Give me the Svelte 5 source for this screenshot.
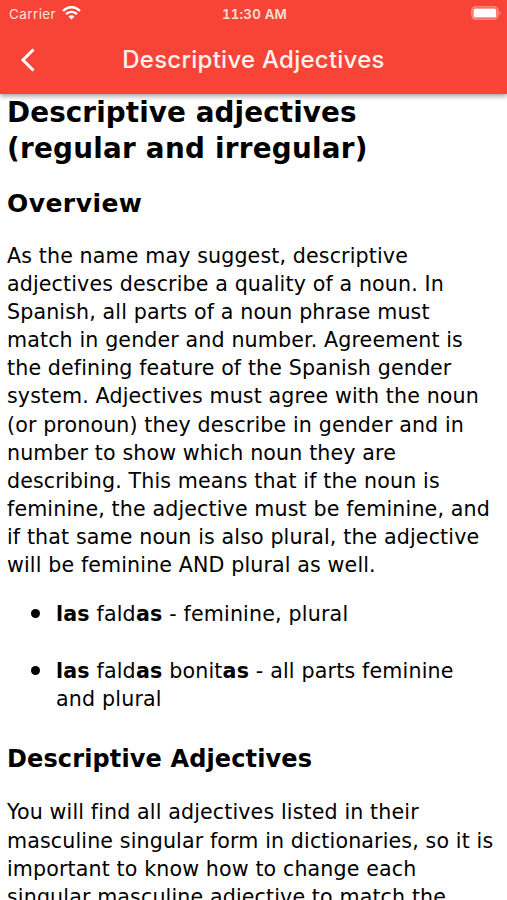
<script>
  const overview = [
    "As the name may suggest, descriptive",
    "adjectives describe a quality of a noun. In",
    "Spanish, all parts of a noun phrase must",
    "match in gender and number. Agreement is",
    "the defining feature of the Spanish gender",
    "system. Adjectives must agree with the noun",
    "(or pronoun) they describe in gender and in",
    "number to show which noun they are",
    "describing. This means that if the noun is",
    "feminine, the adjective must be feminine, and",
    "if that same noun is also plural, the adjective",
    "will be feminine AND plural as well."
  ];

  const endings = [
    "You will find all adjectives listed in their",
    "masculine singular form in dictionaries, so it is",
    "important to know how to change each",
    "singular masculine adjective to match the"
  ];
</script>

<style>
  :global(body) {
    background: white;
    overflow: hidden;
  }

  .screen {
    height: 900px;
    overflow: hidden;
    display: flex;
    flex-direction: column;
    color: black;
    background: white;
  }

  header {
    flex: none;
    height: 94px;
    position: relative;
    z-index: 1;
    color: white;
    background: #f74436;
    box-shadow: 0 2px 5px rgba(0, 0, 0, 0.4);
  }

  .status {
    height: 27px;
    display: grid;
    grid-template-columns: 1fr auto 1fr;
    align-items: center;
    padding: 0 5px 0 9px;
    font: 13.5px Inter, sans-serif;
    color: #fee0dd;
  }

  .carrier {
    display: flex;
    align-items: center;
    gap: 6px;
    letter-spacing: 0.4px;
  }

  .carrier svg {
    margin-top: -2px;
  }

  .time {
    font-size: 13.3px;
    font-weight: 600;
    font-variant-numeric: tabular-nums;
    letter-spacing: 0.2px;
    margin-right: 2px;
  }

  .battery {
    justify-self: end;
    margin-top: -1px;
  }

  svg {
    display: block;
  }

  .bar {
    height: 67px;
    display: grid;
    grid-template-columns: 56px 1fr 56px;
    align-items: center;
  }

  .back {
    border: 0;
    padding: 0 0 2px 20px;
    color: white;
    background: transparent;
  }

  .title {
    font: 500 24px Inter, sans-serif;
    letter-spacing: 0.25px;
    text-align: center;
    white-space: nowrap;
    padding-bottom: 2px;
    color: #fff1ef;
  }

  main {
    padding: 1px 7px 0;
    font: 20.6px/28.1px "DejaVu Sans", Verdana, sans-serif;
    letter-spacing: 0.13px;
    white-space: nowrap;
  }

  h1, h2, p, ul {
    margin: 0;
  }

  h1 {
    font-size: 27.8px;
    line-height: 36px;
    letter-spacing: 0.1px;
  }

  h1 span {
    display: block;
    letter-spacing: 0.25px;
  }

  h2 {
    font-size: 24px;
    line-height: 32px;
    margin: 30px 0 23px;
  }

  h2.overview {
    font-size: 25px;
    letter-spacing: 0.45px;
    margin: 21px 0 22px;
  }

  .line {
    display: block;
  }

  ul {
    list-style: none;
    padding: 0 0 0 49px;
    margin: 21px 0 0;
    letter-spacing: 0.18px;
  }

  li {
    position: relative;
  }

  li::before {
    content: "";
    position: absolute;
    left: -25px;
    top: 9px;
    width: 9px;
    height: 9px;
    border-radius: 50%;
    background: black;
  }

  li + li {
    margin-top: 29px;
  }
</style>

<div class="screen">
  <header>
    <div class="status">
      <div class="carrier">
        Carrier
        <svg width="19" height="14" viewBox="0 0 19 14" fill="none" stroke="white" stroke-width="2.4">
          <path d="M1 5C6-.1 13-.1 18 5M4 8.2C7 5.1 12 5.1 15 8.2" />
          <path d="M6.5 10.5Q9.5 8 12.5 10.5L9.5 13.5Z" fill="white" stroke="none" />
        </svg>
      </div>
      <span class="time">11:30 AM</span>
      <svg class="battery" width="31" height="14" viewBox="0 0 31 14">
        <rect x=".9" y=".9" width="26" height="12.2" rx="4" fill="none" stroke="#fb9a92" stroke-width="1.4" />
        <rect x="2.5" y="2.5" width="22.8" height="9" rx="1.5" fill="white" />
        <path d="M28.5 5Q31 7 28.5 9Z" fill="#fb9a92" />
      </svg>
    </div>
    <div class="bar">
      <button class="back" aria-label="Back">
        <svg width="16" height="26" viewBox="0 0 16 26" fill="none" stroke="currentColor" stroke-width="3">
          <path d="M13.5 2.5L3 13L13.5 23.5" />
        </svg>
      </button>
      <div class="title">Descriptive Adjectives</div>
    </div>
  </header>

  <main>
    <h1>Descriptive adjectives <span>(regular and irregular)</span></h1>
    <h2 class="overview">Overview</h2>
    <p>
      {#each overview as line}
        <span class="line">{line}</span>
      {/each}
    </p>
    <ul>
      <li><b>las</b> fald<b>as</b> - feminine, plural</li>
      <li><b>las</b> fald<b>as</b> bonit<b>as</b> - all parts feminine<br />and plural</li>
    </ul>
    <h2>Descriptive Adjectives</h2>
    <p>
      {#each endings as line}
        <span class="line">{line}</span>
      {/each}
    </p>
  </main>
</div>
